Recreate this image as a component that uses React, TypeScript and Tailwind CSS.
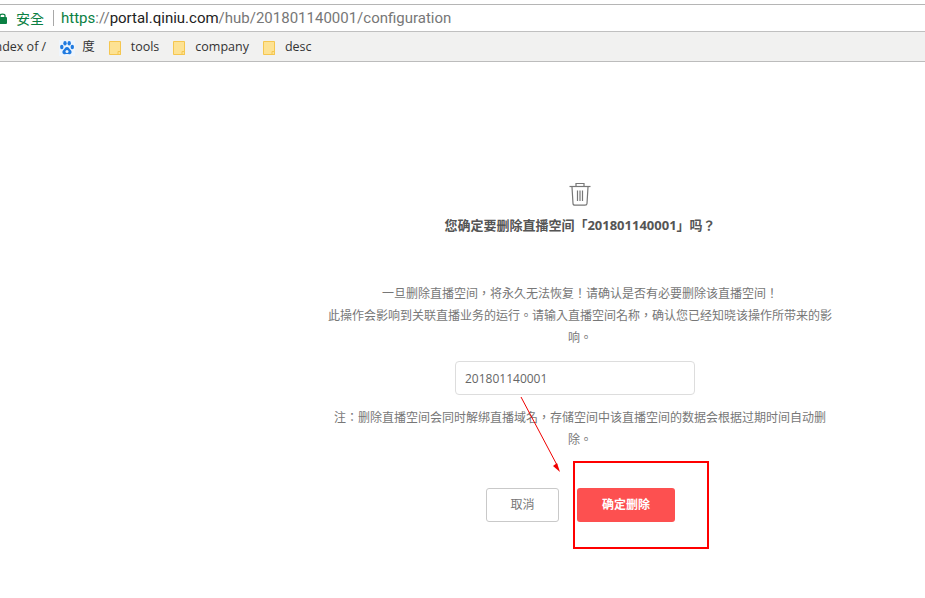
function Folder() {
  return (
    <svg width="12" height="14" viewBox="0 0 12 14" className="shrink-0">
      <path d="M0.5 0.5H11.5V13.5H0.5Z" fill="#fde293" stroke="#f5c64f" />
      <path d="M9 10.5H11.5V13.5H9Z" fill="#fde293" stroke="#f5c64f" />
    </svg>
  );
}

function Paw() {
  return (
    <svg width="16" height="16" viewBox="0 0 16 16" className="shrink-0">
      <rect width="16" height="16" fill="#eef5fd" />
      <g fill="#1f7ae0">
        <ellipse cx="2.8" cy="7" rx="1.7" ry="2.2" />
        <ellipse cx="6" cy="3.2" rx="1.7" ry="2.3" />
        <ellipse cx="10.2" cy="3.2" rx="1.7" ry="2.3" />
        <ellipse cx="13.3" cy="7" rx="1.7" ry="2.2" />
        <path d="M8 7C6 7 5.6 9 4.2 10.2C2.6 11.8 3.6 14.5 6 14.2C7 14 9 14 10 14.2C12.5 14.5 13.4 11.8 11.8 10.2C10.4 9 10 7 8 7Z" />
      </g>
      <circle cx="8" cy="11.6" r="1.5" fill="#eef5fd" />
    </svg>
  );
}

function Bookmark({ label }: { label: string }) {
  return (
    <div className="ml-[14px] flex items-center">
      <Folder />
      <span className="ml-[10px] text-[12.5px] text-[#333]">{label}</span>
    </div>
  );
}

export default function App() {
  return (
    <div className="relative h-[598px] w-[925px] overflow-hidden bg-white font-['Open_Sans','Noto_Sans_CJK_TC',sans-serif]">
      {/* browser chrome */}
      <div className="mt-[4px] border-t border-[#b5b5b5]" />
      <div className="flex h-[27px] items-center overflow-hidden border-b border-[#c0c0c0] bg-white">
        <svg width="9" height="11" viewBox="0 0 9 11" className="ml-[-2px] shrink-0">
          <rect x="0" y="4" width="9" height="7" rx="1" fill="#0b8043" />
          <path d="M2 4V2.6C2 0.5 7 0.5 7 2.6V4" fill="none" stroke="#0b8043" strokeWidth="1.3" />
        </svg>
        <span className="ml-[9px] text-[14px] text-[#0b8043]">安全</span>
        <span className="ml-[9px] h-[16px] w-px bg-[#a8a8a8]" />
        <div className="ml-[7px] font-['Roboto','Liberation_Sans',sans-serif] text-[15px]">
          <span className="text-[#0b8043]">https</span>
          <span className="text-[#777]">://</span>
          <span className="text-[#222]">portal.qiniu.com</span>
          <span className="text-[#777]">/hub/201801140001/configuration</span>
        </div>
      </div>
      <div className="flex h-[30px] items-center overflow-hidden border-b border-[#bcbcbc] bg-[#f1f1f0] pt-[2px]">
        <span className="ml-[-9px] shrink-0 text-[12.5px] text-[#333]">Index of /</span>
        <div className="ml-[13px]"><Paw /></div>
        <span className="ml-[7px] text-[12.5px] text-[#333]">度</span>
        <Bookmark label="tools" />
        <Bookmark label="company" />
        <Bookmark label="desc" />
      </div>

      {/* confirm panel */}
      <div className="ml-[325px] flex w-[510px] flex-col items-center">
        <svg width="22" height="24" viewBox="0 0 22 24" fill="none" stroke="#777" strokeWidth="1.2" className="mt-[120px]">
          <path d="M0.5 4.5H21.5" />
          <path d="M7 4V1.5H15V4" />
          <path d="M3 5L4 21.5C4 22.5 5 23.2 6 23.2H16C17 23.2 18 22.5 18 21.5L19 5" />
          <path d="M8.5 8.5V19M11 8.5V19M13.5 8.5V19" />
        </svg>
        <h1 className="mt-[9px] text-[13px] leading-[20px] font-bold text-[#555]">
          您确定要删除直播空间「201801140001」吗？
        </h1>
        <p className="mt-[48px] text-center text-[12px] leading-[22px] text-[#777]">
          一旦删除直播空间，将永久无法恢复！请确认是否有必要删除该直播空间！
          <br />
          此操作会影响到关联直播业务的运行。请输入直播空间名称，确认您已经知晓该操作所带来的影响。
        </p>
        <input
          readOnly
          value="201801140001"
          className="mt-[12px] mr-[10px] h-[34px] w-[240px] rounded-[4px] border border-[#dddddd] px-[9px] text-[12px] text-[#666] outline-none"
        />
        <p className="mt-[12px] text-center text-[12px] leading-[22px] text-[#777]">
          注：删除直播空间会同时解绑直播域名，存储空间中该直播空间的数据会根据过期时间自动删除。
        </p>
        <div className="mt-[37px] flex gap-[18px] pl-[1px]">
          <button className="h-[34px] w-[73px] rounded-[3px] border border-[#c9c9c9] bg-white text-[12px] text-[#777]">
            取消
          </button>
          <button className="h-[34px] w-[98px] rounded-[3px] bg-[#fd5050] text-[12px] font-bold text-white">
            确定删除
          </button>
        </div>
      </div>

      {/* red annotations over the page */}
      <div className="absolute left-[573px] top-[461px] h-[88px] w-[136px] border-2 border-[#ff0000]" />
      <svg width="50" height="80" viewBox="0 0 50 80" className="absolute left-[518px] top-[396px]">
        <path d="M3 1L39 69" stroke="#f00000" strokeWidth="1" />
        <path d="M42 76L35 70L39 67Z" fill="#f00000" />
      </svg>
    </div>
  );
}
